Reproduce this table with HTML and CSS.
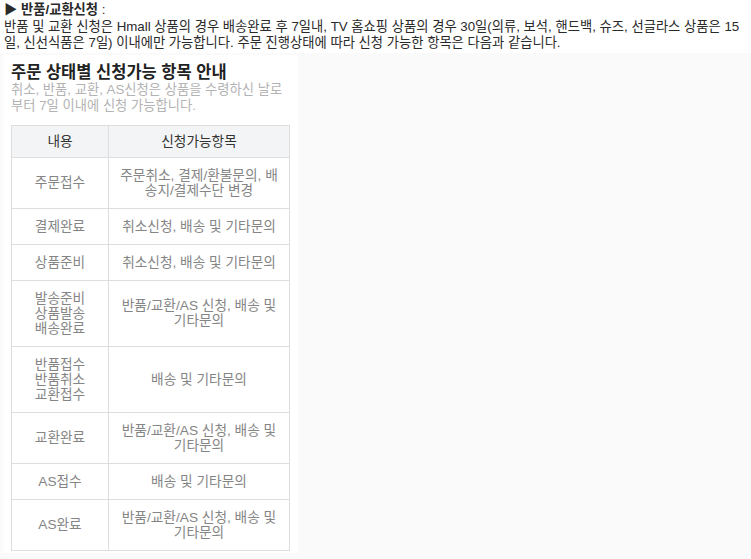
FILE: index.html
```html
<!DOCTYPE html>
<html lang="ko">
<head>
    <meta charset="UTF-8">
    <title>반품/교환신청</title>
    <link rel="stylesheet" href="styles.css">
</head>
<body>
    <div class="intro">
        <strong>▶ 반품/교환신청</strong> :<br>
        반품 및 교환 신청은 Hmall 상품의 경우 배송완료 후 7일내, TV 홈쇼핑 상품의 경우 30일(의류, 보석, 핸드백, 슈즈, 선글라스 상품은 15일, 신선식품은 7일) 이내에만 가능합니다. 주문 진행상태에 따라 신청 가능한 항목은 다음과 같습니다.
    </div>

    <div class="panel">
        <div class="card">
            <h2>주문 상태별 신청가능 항목 안내</h2>
            <p class="desc">취소, 반품, 교환, AS신청은 상품을 수령하신 날로부터 7일 이내에 신청 가능합니다.</p>
            <table class="status-table">
                <thead>
                    <tr>
                        <th class="col-state">내용</th>
                        <th>신청가능항목</th>
                    </tr>
                </thead>
                <tbody>
                    <tr>
                        <td>주문접수</td>
                        <td>주문취소, 결제/환불문의, 배송지/결제수단 변경</td>
                    </tr>
                    <tr>
                        <td>결제완료</td>
                        <td>취소신청, 배송 및 기타문의</td>
                    </tr>
                    <tr>
                        <td>상품준비</td>
                        <td>취소신청, 배송 및 기타문의</td>
                    </tr>
                    <tr>
                        <td>발송준비<br>상품발송<br>배송완료</td>
                        <td>반품/교환/AS 신청, 배송 및 기타문의</td>
                    </tr>
                    <tr>
                        <td>반품접수<br>반품취소<br>교환접수</td>
                        <td>배송 및 기타문의</td>
                    </tr>
                    <tr>
                        <td>교환완료</td>
                        <td>반품/교환/AS 신청, 배송 및 기타문의</td>
                    </tr>
                    <tr>
                        <td>AS접수</td>
                        <td>배송 및 기타문의</td>
                    </tr>
                    <tr>
                        <td>AS완료</td>
                        <td>반품/교환/AS 신청, 배송 및 기타문의</td>
                    </tr>
                </tbody>
            </table>
        </div>
    </div>
</body>
</html>
```

FILE: styles.css
```css
body {
    margin: 0;
    padding: 0;
    background-color: #fff;
    font-family: "Liberation Sans", "Noto Sans CJK KR", sans-serif;
    color: #222;
}

.intro {
    padding: 2px 4px 1px;
    font-size: 13.3px;
    line-height: 16.5px;
    color: #2a2a2a;
}

.intro strong {
    font-weight: bold;
}

.panel {
    background-color: #fafafa;
    padding: 2px 3px 8px;
}

.card {
    width: 279px;
    background-color: #fff;
    padding: 8px 8px 2px;
}

.card h2 {
    margin: 0;
    font-size: 16.5px;
    line-height: 18px;
    font-weight: bold;
    color: #222;
}

.desc {
    margin: 1px 0 11px;
    font-size: 13.3px;
    line-height: 16px;
    color: #b3b3b3;
}

.status-table {
    width: 100%;
    border-collapse: collapse;
    font-size: 13.7px;
    line-height: 15px;
    color: #858585;
    text-align: center;
}

.status-table th,
.status-table td {
    border: 1px solid #dedede;
    padding: 10px 10px;
}

.status-table th {
    background-color: #f3f4f6;
    color: #333;
    font-weight: normal;
    padding: 8px 10px;
}

.col-state {
    width: 76px;
}
```
